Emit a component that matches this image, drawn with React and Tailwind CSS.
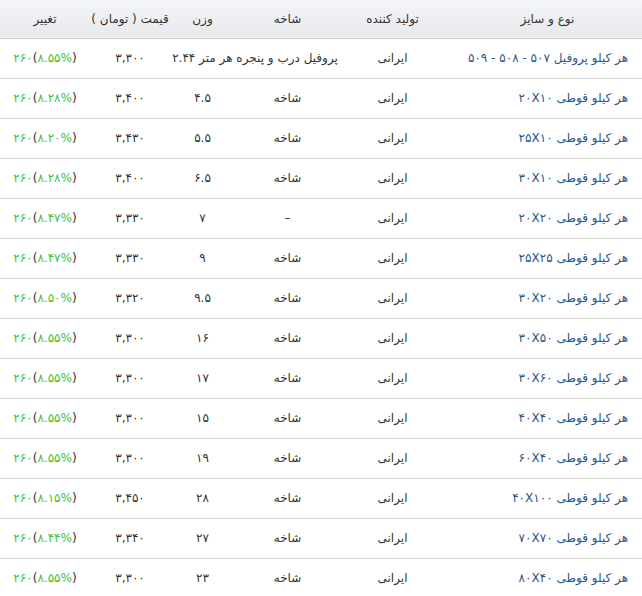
import React from 'react';

const rows = [
  { size: '۲۰X۱۰', branch: 'شاخه', weight: '۴.۵', price: '۳,۴۰۰', pct: '۸.۲۸%' },
  { size: '۲۵X۱۰', branch: 'شاخه', weight: '۵.۵', price: '۳,۴۳۰', pct: '۸.۲۰%' },
  { size: '۳۰X۱۰', branch: 'شاخه', weight: '۶.۵', price: '۳,۴۰۰', pct: '۸.۲۸%' },
  { size: '۲۰X۲۰', branch: '–', weight: '۷', price: '۳,۳۳۰', pct: '۸.۴۷%' },
  { size: '۲۵X۲۵', branch: 'شاخه', weight: '۹', price: '۳,۳۳۰', pct: '۸.۴۷%' },
  { size: '۳۰X۲۰', branch: 'شاخه', weight: '۹.۵', price: '۳,۳۲۰', pct: '۸.۵۰%' },
  { size: '۳۰X۵۰', branch: 'شاخه', weight: '۱۶', price: '۳,۳۰۰', pct: '۸.۵۵%' },
  { size: '۳۰X۶۰', branch: 'شاخه', weight: '۱۷', price: '۳,۳۰۰', pct: '۸.۵۵%' },
  { size: '۴۰X۴۰', branch: 'شاخه', weight: '۱۵', price: '۳,۳۰۰', pct: '۸.۵۵%' },
  { size: '۶۰X۴۰', branch: 'شاخه', weight: '۱۹', price: '۳,۳۰۰', pct: '۸.۵۵%' },
  { size: '۴۰X۱۰۰', branch: 'شاخه', weight: '۲۸', price: '۳,۴۵۰', pct: '۸.۱۵%' },
  { size: '۷۰X۷۰', branch: 'شاخه', weight: '۲۷', price: '۳,۳۴۰', pct: '۸.۴۴%' },
  { size: '۸۰X۴۰', branch: 'شاخه', weight: '۲۳', price: '۳,۳۰۰', pct: '۸.۵۵%' },
];

const Change = ({ pct }) => (
  <span dir="ltr" className="whitespace-nowrap">
    <span className="text-[#3cc43c]">۲۶۰</span>
    <span className="text-[#333]">(</span>
    <span className="text-[#3cc43c]">{pct}</span>
    <span className="text-[#333]">)</span>
  </span>
);

const base = 'h-10 border-b border-[#d6d6d6]';
const cell = `${base} text-center text-[#333]`;
const nameCell = `${base} text-right pr-[14px] text-[#2a548f] whitespace-nowrap`;

export default function App() {
  return (
    <div dir="rtl" className="w-[642px] bg-white font-['DejaVu_Sans',sans-serif] text-[12px]">
      <table className="w-full table-fixed border-collapse">
        <colgroup>
          <col className="w-[197px]" />
          <col className="w-[105px]" />
          <col className="w-[105px]" />
          <col className="w-[65px]" />
          <col className="w-[80px]" />
          <col className="w-[90px]" />
        </colgroup>
        <thead>
          <tr className="h-[38px] bg-gradient-to-b from-[#f4f5f8] to-[#e8e9ed] border-b border-[#c9c9c9]">
            <th className="font-normal text-[#333] pl-2">نوع و سایز</th>
            <th className="font-normal text-[#333]">تولید کننده</th>
            <th className="font-normal text-[#333]">شاخه</th>
            <th className="font-normal text-[#333]">وزن</th>
            <th className="font-normal text-[#333]">قیمت ( تومان )</th>
            <th className="font-normal text-[#333]">تغییر</th>
          </tr>
        </thead>
        <tbody>
          <tr>
            <td className={nameCell}>
              هر کیلو پروفیل <span dir="ltr">۵۰۹ - ۵۰۸ - ۵۰۷</span>
            </td>
            <td className={cell}>ایرانی</td>
            <td colSpan={2} className={`${cell} whitespace-nowrap`}>
              پروفیل درب و پنجره هر متر <span dir="ltr">۲.۴۴</span>
            </td>
            <td className={cell}>۳,۳۰۰</td>
            <td className={cell}><Change pct="۸.۵۵%" /></td>
          </tr>
          {rows.map((r) => (
            <tr key={r.size}>
              <td className={nameCell}>
                هر کیلو قوطی <span dir="ltr">{r.size}</span>
              </td>
              <td className={cell}>ایرانی</td>
              <td className={cell}>{r.branch}</td>
              <td className={cell}>{r.weight}</td>
              <td className={cell}>{r.price}</td>
              <td className={cell}><Change pct={r.pct} /></td>
            </tr>
          ))}
        </tbody>
      </table>
    </div>
  );
}
